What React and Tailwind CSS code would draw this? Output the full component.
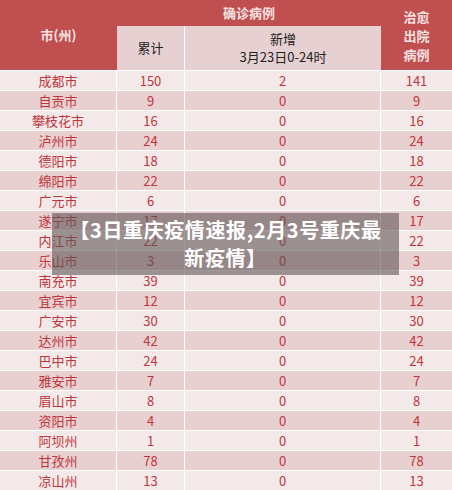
import React from "react";

const rows = [
  ["成都市", 150, 2, 141],
  ["自贡市", 9, 0, 9],
  ["攀枝花市", 16, 0, 16],
  ["泸州市", 24, 0, 24],
  ["德阳市", 18, 0, 18],
  ["绵阳市", 22, 0, 22],
  ["广元市", 6, 0, 6],
  ["遂宁市", 17, 0, 17],
  ["内江市", 22, 0, 22],
  ["乐山市", 3, 0, 3],
  ["南充市", 39, 0, 39],
  ["宜宾市", 12, 0, 12],
  ["广安市", 30, 0, 30],
  ["达州市", 42, 0, 42],
  ["巴中市", 24, 0, 24],
  ["雅安市", 7, 0, 7],
  ["眉山市", 8, 0, 8],
  ["资阳市", 4, 0, 4],
  ["阿坝州", 1, 0, 1],
  ["甘孜州", 78, 0, 78],
  ["凉山州", 13, 0, 13],
];

export default function App() {
  return (
    <div
      className="relative w-[452px] h-[490px] overflow-hidden bg-[#f3e9e9]"
      style={{ fontFamily: '"Noto Sans CJK SC", "Noto Sans", sans-serif' }}
    >
      {/* 表头 */}
      <div className="grid grid-cols-[117px_68px_196px_71px] grid-rows-[26px_44px] bg-[#c0504f] text-[13px]">
        <div className="row-span-2 flex items-center justify-center text-[#f6e2e2] font-bold">市(州)</div>
        <div className="col-span-2 flex items-center justify-center text-[#f6e2e2] font-bold">确诊病例</div>
        <div className="row-span-2 flex flex-col items-center justify-center leading-[19px] text-[#f6e2e2] font-bold">
          <span>治愈</span>
          <span>出院</span>
          <span>病例</span>
        </div>
        <div className="bg-[#e6d0d1] border-r border-white flex items-center justify-center text-[#222]">累计</div>
        <div className="bg-[#e6d0d1] flex flex-col items-center justify-center leading-[18px] text-[#222]">
          <span>新增</span>
          <span>3月23日0-24时</span>
        </div>
      </div>

      {/* 数据 */}
      {rows.map(([city, total, added, cured], i) => (
        <div
          key={city}
          className={
            "grid grid-cols-[117px_68px_196px_71px] h-[20px] border-t border-white text-[13px] leading-[19px] text-[#c0353a] " +
            (i % 2 === 0 ? "bg-[#f3e9e9]" : "bg-[#e8d0d1]")
          }
        >
          <div className="text-center border-r border-white">{city}</div>
          <div className="text-center border-r border-white">{total}</div>
          <div className="text-center border-r border-white">{added}</div>
          <div className="text-center">{cured}</div>
        </div>
      ))}

      {/* 标题浮层 */}
      <div className="absolute left-[52px] top-[213px] w-[347px] h-[62px] bg-[rgba(95,85,85,0.6)] flex items-center justify-center">
        <p className="w-[322px] text-white font-bold text-[20px] leading-[28px] tracking-[0.6px] text-center">
          【3日重庆疫情速报,2月3号重庆最新疫情】
        </p>
      </div>
    </div>
  );
}
